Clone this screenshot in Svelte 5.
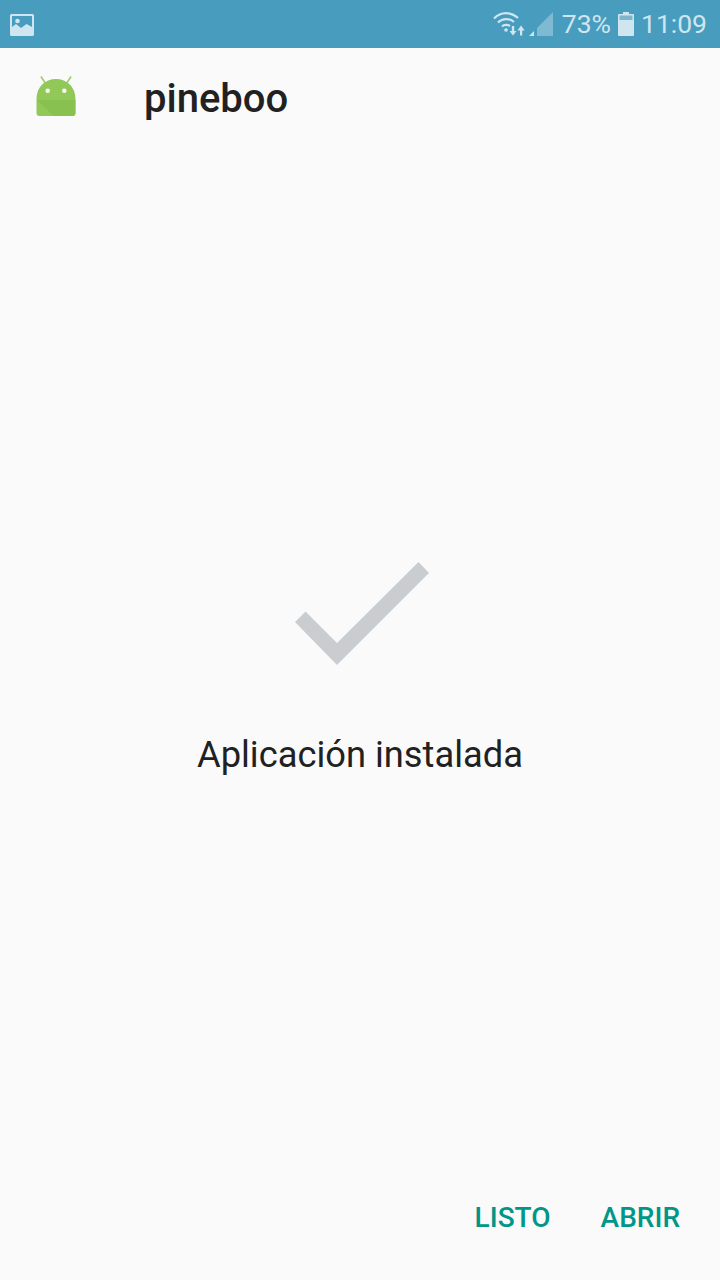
<script>
	const title = 'pineboo';
	const message = 'Aplicación instalada';
</script>

<div class="screen">
	<div class="status-bar">
		<svg class="notif" viewBox="0 0 24 22" width="24" height="22">
			<path fill-rule="evenodd" d="M1.500 0h21A1.500 1.500 0 0 1 24 1.500v19a1.500 1.500 0 0 1-1.500 1.500h-21A1.500 1.500 0 0 1 0 20.500v-19A1.500 1.500 0 0 1 1.500 0zM2 2v11l4-3 5 4 5.500-4 5.500 3V2z" fill="#cfe6f0" />
			<circle cx="7.500" cy="7" r="2.300" fill="#cfe6f0" />
		</svg>
		<div class="status-right">
			<svg class="wifi" viewBox="0 0 32 24" width="32" height="24">
				<g fill="none" stroke="#cfe6f0" stroke-width="2.200">
					<path d="M1 6.500C8 -0.500 18 -0.500 25 6" />
					<path d="M5 10.500C9.500 6 16.500 6 21 10" />
					<path d="M9 14.500C11 12.500 15 12.500 17 14" />
				</g>
				<circle cx="13" cy="18" r="1.800" fill="#cfe6f0" />
				<path d="M18.800 14h2.400v5h2.300l-3.500 4.500L16.500 19h2.300zM27 23.500h2.200v-5h2.500L28 13.500 24.500 18.500H27z" fill="#cfe6f0" />
			</svg>
			<svg class="signal" viewBox="0 0 24 24" width="24" height="24">
				<path d="M0 24l5-5v5z" fill="#cfe6f0" />
				<path d="M8 24V16L24 0v24z" fill="#cfe6f0" opacity="0.4" />
			</svg>
			<span class="pct">73%</span>
			<svg class="battery" viewBox="0 0 16 24" width="16" height="24">
				<path d="M5 0h6v2h4a1 1 0 0 1 1 1v20a1 1 0 0 1-1 1H1a1 1 0 0 1-1-1V3a1 1 0 0 1 1-1h4z" fill="#cfe6f0" />
				<rect x="1.500" y="3.500" width="13" height="4.500" fill="#7fb5cb" />
			</svg>
			<span class="clock">11:09</span>
		</div>
	</div>

	<header class="app-header">
		<svg class="app-icon" viewBox="0 0 40 41" width="40" height="41">
			<path d="M5 0.500l4.500 7M35 0.500l-4.500 7" stroke="#a5d06f" stroke-width="1.800" fill="none" />
			<path d="M0.500 23C0.500 11 9 3 20 3s19.500 8 19.500 20v14a3 3 0 0 1-3 3h-33a3 3 0 0 1-3-3z" fill="#92c858" />
			<path d="M1 24h38.500v13a3 3 0 0 1-3 3H18z" fill="#85bd4c" opacity="0.7" />
			<circle cx="11.700" cy="14.700" r="2.300" fill="#f4f9ec" />
			<circle cx="28.300" cy="14.700" r="2.300" fill="#f4f9ec" />
		</svg>
		<h1>{title}</h1>
	</header>

	<main class="content">
		<svg class="check" viewBox="0 0 134 103" width="134" height="103">
			<polygon points="0,60 10.500,49.500 42,81 123.500,0 134,11 42,103" fill="#cacdd0" />
		</svg>
		<p>{message}</p>
	</main>

	<footer class="actions">
		<button>LISTO</button>
		<button>ABRIR</button>
	</footer>
</div>

<style>
	:global(body) {
		margin: 0;
		background: #fafafa;
	}

	.screen {
		display: flex;
		flex-direction: column;
		height: 1280px;
		background: #fafafa;
		font-family: Roboto, sans-serif;
	}

	.status-bar {
		display: flex;
		align-items: center;
		justify-content: space-between;
		height: 48px;
		padding: 0 13px 0 10px;
		background: #489dbf;
		color: #cfe6f0;
		flex-shrink: 0;
	}

	.status-right {
		display: flex;
		align-items: center;
	}

	.notif {
		display: block;
		margin-top: 2px;
	}

	.wifi {
		margin-right: 4px;
	}

	.signal {
		margin-right: 9px;
	}

	.pct,
	.clock {
		font-size: 26.5px;
		line-height: 48px;
	}

	.battery {
		margin: 0 7px 0 7px;
	}

	.app-header {
		display: flex;
		align-items: center;
		height: 100px;
		padding-left: 36px;
		flex-shrink: 0;
	}

	.app-icon {
		margin: -3px 68px 0 0;
	}

	h1 {
		margin: 0;
		font-size: 40px;
		font-weight: 500;
		color: #212121;
	}

	.content {
		flex: 1;
		display: flex;
		flex-direction: column;
		align-items: center;
		padding-top: 414px;
	}

	.check {
		display: block;
		margin-left: 3px;
	}

	.content p {
		margin: 68px 0 0;
		font-size: 36.3px;
		line-height: 44px;
		color: #212121;
	}

	.actions {
		display: flex;
		justify-content: flex-end;
		gap: 50px;
		padding: 0 40px 42px 0;
	}

	button {
		padding: 0;
		border: none;
		background: none;
		font-family: inherit;
		font-size: 28px;
		font-weight: 500;
		line-height: 40px;
		color: #009688;
	}
</style>
